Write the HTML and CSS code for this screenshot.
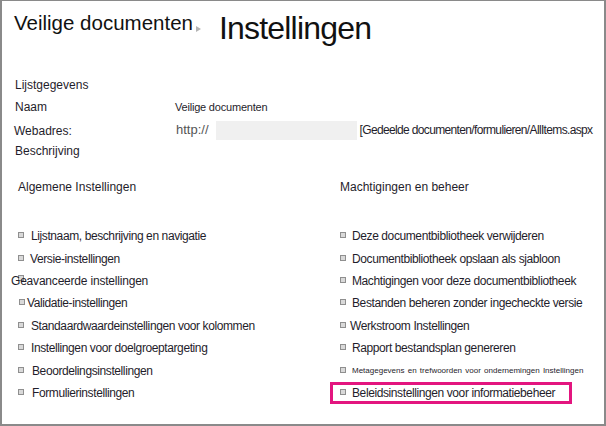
FILE: index.html
```html
<!DOCTYPE html>
<html lang="nl">
<head>
<meta charset="utf-8">
<title>Instellingen</title>
<link rel="stylesheet" href="styles.css">
</head>
<body>
<div class="frame">
  <header class="title-row">
    <span class="site">Veilige documenten</span><span class="arrow"></span>
    <h1 class="page">Instellingen</h1>
  </header>
  <section class="info">
    <div class="info-head">Lijstgegevens</div>
    <div class="row"><span class="label">Naam</span><span class="value v-name">Veilige documenten</span></div>
    <div class="row"><span class="label lbl-web">Webadres:</span><span class="value url"><span class="proto">http://</span><span class="mask"></span><span class="path">[Gedeelde documenten/formulieren/AllItems.aspx</span></span></div>
    <div class="row"><span class="label">Beschrijving</span><span class="value"></span></div>
  </section>
  <section class="sections">
    <div class="col col-left">
      <h2 class="sec-title">Algemene Instellingen</h2>
      <ul class="links">
        <li><span class="b"></span><span class="t">Lijstnaam, beschrijving en navigatie</span></li>
        <li><span class="b"></span><span class="t t-m1">Versie-instellingen</span></li>
        <li><span class="b b-up"></span><span class="t t-adv">Geavanceerde instellingen</span></li>
        <li><span class="b b-r1"></span><span class="t t-tight">Validatie-instellingen</span></li>
        <li><span class="b"></span><span class="t">Standaardwaardeinstellingen voor kolommen</span></li>
        <li><span class="b"></span><span class="t">Instellingen voor doelgroeptargeting</span></li>
        <li><span class="b"></span><span class="t t-p1">Beoordelingsinstellingen</span></li>
        <li><span class="b"></span><span class="t t-p1">Formulierinstellingen</span></li>
      </ul>
    </div>
    <div class="col col-right">
      <h2 class="sec-title">Machtigingen en beheer</h2>
      <ul class="links links-right">
        <li><span class="b"></span><span class="t">Deze documentbibliotheek verwijderen</span></li>
        <li><span class="b"></span><span class="t">Documentbibliotheek opslaan als sjabloon</span></li>
        <li><span class="b"></span><span class="t">Machtigingen voor deze documentbibliotheek</span></li>
        <li><span class="b"></span><span class="t">Bestanden beheren zonder ingecheckte versie</span></li>
        <li><span class="b"></span><span class="t t-m2">Werkstroom Instellingen</span></li>
        <li><span class="b"></span><span class="t">Rapport bestandsplan genereren</span></li>
        <li><span class="b"></span><span class="t t-small">Metagegevens en trefwoorden voor ondernemingen Instellingen</span></li>
        <li class="highlight"><span class="b"></span><span class="t">Beleidsinstellingen voor informatiebeheer</span></li>
      </ul>
    </div>
  </section>
</div>
</body>
</html>
```
FILE: styles.css
```css
html, body {
  margin: 0;
  padding: 0;
  background: #ffffff;
}

body {
  font-family: "Liberation Sans", Arial, sans-serif;
  color: #1f1d2b;
}

.frame {
  width: 606px;
  height: 426px;
  box-sizing: border-box;
  border-style: solid;
  border-color: #8a8a8a;
  border-width: 1px 2px 2px 2px;
  background: #ffffff;
  overflow: hidden;
}

/* Title */
.title-row {
  display: flex;
  align-items: flex-start;
  height: 44px;
  padding-left: 12px;
  white-space: nowrap;
}

.site {
  font-size: 20.5px;
  line-height: 20px;
  margin-top: 12px;
  color: #111;
}

.arrow {
  flex: none;
  width: 0;
  height: 0;
  border-left: 5px solid #b4b4b4;
  border-top: 3px solid transparent;
  border-bottom: 3px solid transparent;
  margin-top: 25px;
  margin-left: 3px;
}

.page {
  margin: 10px 0 0 18px;
  font-size: 32px;
  line-height: 34px;
  font-weight: normal;
  letter-spacing: -0.8px;
  color: #111;
}

/* List info */
.info {
  margin-top: 29px;
  padding-left: 13px;
  font-size: 12px;
}

.info-head,
.row {
  height: 22px;
  line-height: 22px;
  white-space: nowrap;
}

.row {
  display: grid;
  grid-template-columns: 160px 1fr;
  align-items: center;
}

.lbl-web {
  margin-left: -1px;
  padding-top: 2px;
}

.v-name {
  font-size: 11px;
  letter-spacing: -0.2px;
}

.url {
  display: flex;
  align-items: center;
  margin-left: 1px;
}

.proto {
  font-size: 13px;
  color: #555;
}

.mask {
  flex: none;
  display: inline-block;
  width: 141px;
  height: 19px;
  background: #f0f0f0;
  margin-left: 7px;
}

.path {
  margin-left: 3px;
  letter-spacing: -0.65px;
}

/* Sections */
.sections {
  margin-top: 14px;
  display: grid;
  grid-template-columns: 338px 1fr;
  font-size: 12px;
}

.col-left {
  padding-left: 16px;
}

.sec-title {
  margin: 0 0 27px 0;
  font-size: 12px;
  font-weight: normal;
  height: 22px;
  line-height: 22px;
}

.links {
  list-style: none;
  margin: 0;
  padding: 0;
}

.links li {
  display: flex;
  align-items: center;
  height: 22.4px;
  white-space: nowrap;
}

.t {
  letter-spacing: -0.4px;
}

.b {
  flex: none;
  width: 6px;
  height: 6px;
  box-sizing: border-box;
  border: 1px solid #8f8f8f;
  background: #d9d9d9;
  margin-right: 7px;
  margin-bottom: 2px;
}

.b-up {
  margin-bottom: 6px;
}

.b-r1 {
  margin-left: 1px;
  margin-right: 2px;
}

.t-m1 { margin-left: -1px; }
.t-p1 { margin-left: 1px; }
.t-adv { margin-left: -20px; letter-spacing: -0.2px; }
.t-m2 { margin-left: -2px; }

.links-right .b {
  margin-right: 6px;
}

.links .t-small {
  font-size: 8px;
  word-spacing: 1px;
  letter-spacing: 0;
}

.links li.highlight {
  margin-left: -10px;
  padding-left: 7px;
  width: 242px;
  height: 22px;
  box-sizing: border-box;
  border: 3px solid #e3157f;
}
```
